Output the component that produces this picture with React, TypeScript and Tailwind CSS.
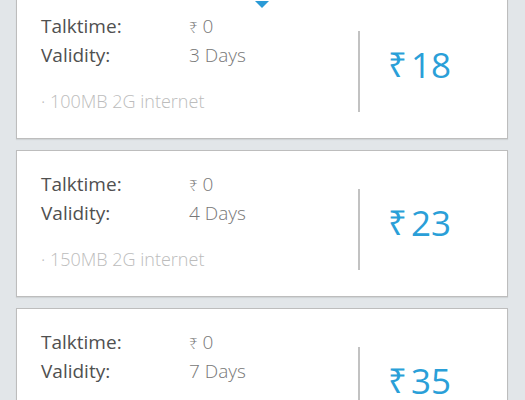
import React from "react";

const plans = [
  { days: "3 Days", data: "100MB 2G internet", price: "18" },
  { days: "4 Days", data: "150MB 2G internet", price: "23" },
  { days: "7 Days", data: "200MB 2G internet", price: "35" },
];

export default function App() {
  return (
    <div
      className="w-[525px] h-[400px] overflow-hidden bg-[#e2e6e9] relative"
      style={{ fontFamily: '"Open Sans", "Noto Sans", sans-serif' }}
    >
      <div className="flex flex-col gap-[11px] mt-[-8px] pl-[16px] pr-[17px]">
        {plans.map((p, i) => (
          <div
            key={i}
            className="relative bg-white border border-[#bdbdbd] h-[147px] flex shadow-[0_1px_1px_rgba(0,0,0,0.08)]"
          >
            {i === 0 && (
              <div className="absolute left-[238px] top-[8px] w-0 h-0 border-l-[7px] border-r-[7px] border-t-[7px] border-l-transparent border-r-transparent border-t-[#2a9ad6]" />
            )}
            <div className="w-[341px] pl-[24px] pt-[19px] flex flex-col">
              <div className="flex h-[29px] items-center text-[19px] leading-[29px]">
                <span className="w-[148px] text-[#505050]">Talktime:</span>
                <span className="text-[#777777] font-light">
                  <span className="text-[15px]" style={{ fontFamily: '"Noto Sans", sans-serif' }}>₹</span> 0
                </span>
              </div>
              <div className="flex h-[29px] items-center text-[19px] leading-[29px]">
                <span className="w-[148px] text-[#505050]">Validity:</span>
                <span className="text-[#777777] font-light">{p.days}</span>
              </div>
              <div className="mt-[19px] text-[18px] leading-[24px] text-[#bcbcbc] font-light">
                · {p.data}
              </div>
            </div>
            <div className="mt-[38px] h-[81px] border-l-[2px] border-[#c2c2c2] pl-[28px] flex items-center">
              <span className="text-[35px] leading-none text-[#2a9fd8] mt-[-14px] flex items-center">
                <span style={{ fontFamily: '"Noto Sans", sans-serif' }} className="text-[33px] mr-[4px]">₹</span>{p.price}
              </span>
            </div>
          </div>
        ))}
      </div>
    </div>
  );
}
